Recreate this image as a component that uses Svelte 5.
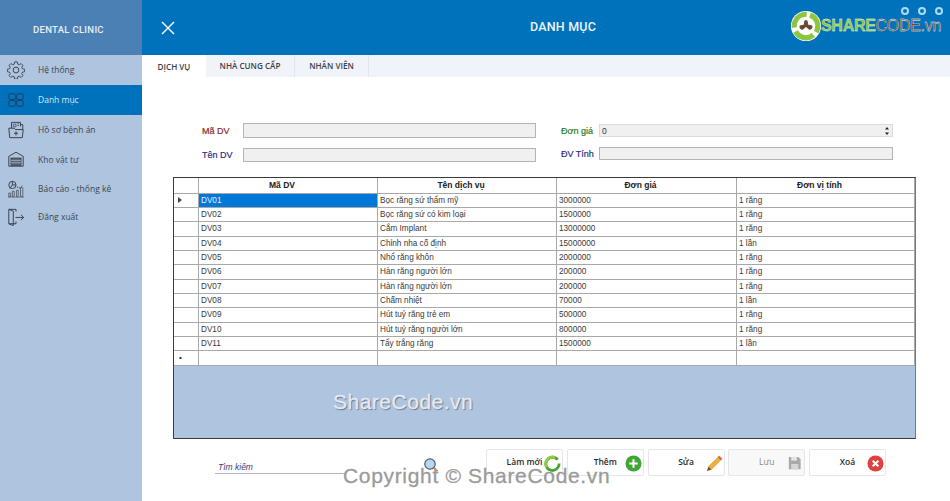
<script>
  const menu = [
    { id: "gear", label: "Hệ thống" },
    { id: "grid", label: "Danh mục", active: true },
    { id: "record", label: "Hồ sơ bệnh án" },
    { id: "store", label: "Kho vật tư" },
    { id: "chart", label: "Báo cáo - thống kê" },
    { id: "exit", label: "Đăng xuất", short: true },
  ];

  const tabs = ["DỊCH VỤ", "NHÀ CUNG CẤP", "NHÂN VIÊN"];

  const rows = [
    ["DV01", "Bọc răng sứ thẩm mỹ", "3000000", "1 răng"],
    ["DV02", "Bọc răng sứ có kim loại", "1500000", "1 răng"],
    ["DV03", "Cắm Implant", "13000000", "1 răng"],
    ["DV04", "Chỉnh nha cố định", "15000000", "1 lần"],
    ["DV05", "Nhổ răng khôn", "2000000", "1 răng"],
    ["DV06", "Hàn răng người lớn", "200000", "1 răng"],
    ["DV07", "Hàn răng người lớn", "200000", "1 răng"],
    ["DV08", "Chấm nhiệt", "70000", "1 lần"],
    ["DV09", "Hút tuỷ răng trẻ em", "500000", "1 răng"],
    ["DV10", "Hút tuỷ răng người lớn", "800000", "1 răng"],
    ["DV11", "Tẩy trắng răng", "1500000", "1 lần"],
  ];
</script>

<div class="app">
  <aside class="sidebar">
    <div class="brand">DENTAL CLINIC</div>
    <nav>
      {#each menu as item}
        <div class="item" class:active={item.active} class:short={item.short}>
          <svg class="micon" viewBox="0 0 20 20" fill="none" stroke="currentColor" stroke-width="1.100">
            {#if item.id === "gear"}
              <circle cx="10" cy="10" r="3.200" />
              <path d="M8.500 1.500h3l.5 2.600 1.800.8 2.200-1.400 2.100 2.100-1.400 2.200.8 1.800 2.600.5v3l-2.600.5-.8 1.800 1.400 2.200-2.100 2.100-2.200-1.400-1.800.8-.5 2.600h-3l-.5-2.600-1.800-.8-2.200 1.400-2.100-2.100 1.400-2.200-.8-1.800-2.600-.5v-3l2.600-.5.8-1.800-1.400-2.200 2.100-2.100 2.200 1.400 1.800-.8z" transform="translate(.5 -.5) scale(.95)" />
            {:else if item.id === "grid"}
              <rect x="2" y="3" width="7.500" height="6.500" rx="1.800" />
              <rect x="10.500" y="3" width="7.500" height="6.500" rx="1.800" />
              <rect x="2" y="10.500" width="7.500" height="6.500" rx="1.800" />
              <rect x="10.500" y="10.500" width="7.500" height="6.500" rx="1.800" />
            {:else if item.id === "record"}
              <path d="M5 8V1.500h10V6" />
              <path d="M7 3.500h3v3H7zM11.500 3h2M11.500 5h2" stroke-width=".8" />
              <path d="M15 4h2.500v5" />
              <path d="M2 8h6l1.200 1.500H18l-1 9H3z" />
              <path d="M10 11.500v4.500M7.800 13.700h4.400" />
            {:else if item.id === "store"}
              <path d="M2 7 10 2.500 18 7v11H2z" />
              <rect x="4.500" y="9" width="11" height="8" fill="#5f6875" stroke="#3a4452" />
              <path d="M4.500 11.600h11M4.500 14.200h11" stroke="#afc4de" stroke-width=".7" />
            {:else if item.id === "chart"}
              <circle cx="6" cy="5.500" r="4" />
              <path d="M6 5.500V1.500h0M6 5.500h4" />
              <path d="M3 9.500 6 5.500" />
              <path d="M11 7.500l2.500 1.500 4-3" stroke-dasharray="1.500 1" />
              <path d="M2 18.500v-4h2v4zM6 18.500v-6h2v6zM10.500 18.500v-7h2v7zM15 18.500V8.500h2.500v10z" stroke-width=".8" />
              <path d="M1 19h18" stroke-width=".6" />
            {:else}
              <path d="M10 4V1.500H2v16h8V15" />
              <path d="M2 1.500l5 2V19.500l-5-2" />
              <path d="M9.500 10.500h9M15.500 7.500l3 3-3 3" />
            {/if}
          </svg>
          <span>{item.label}</span>
        </div>
      {/each}
    </nav>
  </aside>

  <main class="main">
    <header class="topbar">
      <svg class="close" viewBox="0 0 14 14" stroke="#fff" stroke-width="1.400" fill="none">
        <path d="M1 1l12 12M13 1L1 13" />
      </svg>
      <h1>DANH MỤC</h1>
      <div class="logo">
        <svg class="logo-mark" viewBox="0 0 34 34" fill="none">
          <circle cx="17" cy="17" r="16" fill="#fff" />
          <circle cx="17" cy="17" r="12.500" stroke="#8cc63f" stroke-width="5.500" stroke-dasharray="22 4.200" transform="rotate(-70 17 17)" />
          <path d="M17 10.500c2 0 2.500 3 2 5l4.500 1c1.500 2-1 5-3 4.500l-3.500-3-3.500 3c-2 .5-4.500-2.500-3-4.500l4.500-1c-.5-2 0-5 2-5z" fill="#6b4a2f" />
        </svg>
        <div class="logo-text"><b>SHARE</b><span>CODE.vn</span></div>
        <div class="dots"><i></i><i></i><i></i></div>
      </div>
    </header>

    <div class="tabs">
      {#each tabs as tab, i}
        <div class="tab" class:current={i === 0}>{tab}</div>
      {/each}
    </div>

    <section class="form">
      <div class="field left">
        <label class="maroon" for="ma">Mã DV</label>
        <input id="ma" />
        <label class="navy" for="ten">Tên DV</label>
        <input id="ten" />
      </div>
      <div class="field right">
        <label class="green" for="gia">Đơn giá</label>
        <div class="spin" id="gia">
          <span>0</span>
          <svg viewBox="0 0 6 10" width="6" height="10" fill="#222"><path d="M3 1l2 2.500H1zM3 9L1 6.500h4z" /></svg>
        </div>
        <label class="navy" for="dvt">ĐV Tính</label>
        <input id="dvt" />
      </div>
    </section>

    <section class="grid">
      <div class="row head">
        <div class="cell"></div>
        <div class="cell">Mã DV</div>
        <div class="cell">Tên dịch vụ</div>
        <div class="cell">Đơn giá</div>
        <div class="cell">Đơn vị tính</div>
      </div>
      {#each rows as r, i}
        <div class="row">
          <div class="cell mark">
            {#if i === 0}<svg viewBox="0 0 4 6" width="4" height="6" fill="#444"><path d="M0 0l4 3-4 3z" /></svg>{/if}
          </div>
          <div class="cell" class:selected={i === 0}>{r[0]}</div>
          <div class="cell">{r[1]}</div>
          <div class="cell">{r[2]}</div>
          <div class="cell">{r[3]}</div>
        </div>
      {/each}
      <div class="row">
        <div class="cell mark star">•</div>
        <div class="cell"></div>
        <div class="cell"></div>
        <div class="cell"></div>
        <div class="cell"></div>
      </div>
    </section>

    <section class="toolbar">
      <div class="search">
        <span>Tìm kiếm</span>
        <svg class="lens" viewBox="0 0 16 16" fill="none">
          <path d="M10 10l4.500 4.500" stroke="#c58a3c" stroke-width="2" />
          <circle cx="7" cy="7" r="5.200" fill="#bcd6ee" stroke="#3f5f86" stroke-width="1.200" />
        </svg>
      </div>
      <button class="btn">
        <span>Làm mới</span>
        <svg viewBox="0 0 18 18" fill="none">
          <path d="M14.500 5A7 7 0 1 0 16 9" stroke="#4aa52e" stroke-width="3" />
          <path d="M3 13A7 7 0 0 1 12 3" stroke="#8ccb4a" stroke-width="3" />
        </svg>
      </button>
      <button class="btn">
        <span>Thêm</span>
        <svg viewBox="0 0 18 18">
          <circle cx="9" cy="9" r="8.500" fill="#3fa535" />
          <path d="M9 4.500v9M4.500 9h9" stroke="#fff" stroke-width="2.200" />
        </svg>
      </button>
      <button class="btn">
        <span>Sửa</span>
        <svg viewBox="0 0 18 18">
          <path d="M14 1l3 3L5.500 15.500l-3-3z" fill="#f0b23c" stroke="#c98a1e" stroke-width=".6" />
          <path d="M14 1l3 3-1.500 1.500-3-3z" fill="#d9605a" />
          <path d="M2.500 12.500l3 3L1 17z" fill="#6b4a2f" />
        </svg>
      </button>
      <button class="btn off">
        <span>Lưu</span>
        <svg viewBox="0 0 18 18">
          <path d="M3 2h10l2.500 2.500V15H3z" fill="#a9a9a9" />
          <rect x="5.500" y="2" width="6" height="4" fill="#e4e4e4" />
          <rect x="5.500" y="9.500" width="7.500" height="5.500" fill="#d6d6d6" />
        </svg>
      </button>
      <button class="btn">
        <span>Xoá</span>
        <svg viewBox="0 0 18 18">
          <circle cx="9" cy="9" r="8.500" fill="#dd4140" />
          <path d="M6 6l6 6M12 6l-6 6" stroke="#fff" stroke-width="2.200" />
        </svg>
      </button>
    </section>
  </main>

  <div class="wm wm-mid">ShareCode.vn</div>
  <div class="wm wm-bottom">Copyright © ShareCode.vn</div>
</div>

<style>
  :global(body) {
    margin: 0;
    background: #fff;
  }

  .app {
    position: relative;
    display: grid;
    grid-template-columns: 142px 808px;
    width: 950px;
    height: 501px;
    overflow: hidden;
    font-family: "Liberation Sans", Arial, sans-serif;
  }

  .sidebar {
    background: #afc4de;
    color: #3c4654;
  }

  .brand {
    height: 55px;
    line-height: 59px;
    padding-left: 33px;
    background: #4a80b3;
    color: #e8eff7;
    font-family: Roboto, sans-serif;
    font-size: 9.500px;
    font-weight: 500;
    letter-spacing: 0.3px;
  }

  .item {
    display: flex;
    align-items: center;
    gap: 13px;
    height: 29.700px;
    padding-left: 7px;
    font-family: "Open Sans", sans-serif;
    font-size: 8.500px;
  }

  .item.short {
    height: 26px;
  }

  .item.active {
    height: 30px;
    background: #0072bc;
    color: #d5e6f5;
  }

  .micon {
    width: 18px;
    height: 18px;
    flex: none;
    color: #3a4452;
  }

  .active .micon {
    color: #1d3f66;
  }

  .main {
    display: flex;
    flex-direction: column;
  }

  .topbar {
    position: relative;
    display: flex;
    align-items: center;
    justify-content: center;
    flex: none;
    height: 55px;
    background: #0072bc;
  }

  .close {
    position: absolute;
    left: 19px;
    top: 21px;
    width: 14px;
    height: 14px;
  }

  h1 {
    margin: 0 0 2px 34px;
    color: #eef5fb;
    font-family: Roboto, sans-serif;
    font-size: 12.500px;
    font-weight: 500;
    letter-spacing: 0.2px;
  }

  .logo {
    position: absolute;
    left: 648px;
    top: 9px;
    display: flex;
    align-items: center;
    width: 160px;
    height: 34px;
  }

  .logo-mark {
    width: 32px;
    height: 32px;
    flex: none;
  }

  .logo-text {
    margin-left: -1px;
    font-size: 16px;
    letter-spacing: -0.3px;
    white-space: nowrap;
    -webkit-text-stroke: 0.300px #fff;
  }

  .logo-text b {
    color: #8cc63f;
    font-weight: 700;
  }

  .logo-text span {
    color: #6b4a2f;
  }

  .dots {
    position: absolute;
    right: 7px;
    top: -2px;
    display: flex;
    gap: 9px;
  }

  .dots i {
    width: 4px;
    height: 4px;
    border: 2px solid #a9dcf5;
    border-radius: 50%;
  }

  .tabs {
    display: flex;
    flex: none;
    height: 22px;
    background: #f0f4f8;
  }

  .tab {
    display: flex;
    align-items: center;
    justify-content: center;
    width: 73px;
    height: 21px;
    padding-bottom: 1px;
    border-right: 1px solid #e2e6ea;
    color: #3a4048;
    font-family: "Open Sans", sans-serif;
    font-size: 8.100px;
    font-weight: 600;
    white-space: nowrap;
  }

  .tab.current {
    width: 64px;
    height: 22px;
    padding-bottom: 0;
    background: #fff;
    border-right: 0;
  }

  .tab:nth-child(2) {
    width: 88px;
  }

  .form {
    display: grid;
    grid-template-columns: 394px 332px;
    gap: 25px;
    flex: none;
    height: 100px;
    padding: 46px 0 0 60px;
    box-sizing: border-box;
  }

  .field {
    display: grid;
    align-items: center;
    height: 39px;
    font-size: 9px;
  }

  .left {
    grid-template-columns: 41px 293px;
    grid-template-rows: 15px 14px;
    row-gap: 10px;
  }

  .right {
    grid-template-columns: 38px 294px;
    grid-template-rows: 13px 13px;
    row-gap: 10px;
    padding-top: 1px;
    margin-left: -60px;
  }

  label {
    -webkit-text-stroke: 0.2px currentColor;
  }

  .maroon {
    color: #8a2a2a;
  }

  .navy {
    color: #2d2d80;
  }

  .green {
    color: #1f7d2a;
  }

  input,
  .spin {
    width: 100%;
    height: 100%;
    margin: 0;
    padding: 0;
    box-sizing: border-box;
    background: #f0f0f0;
    border: 1px solid #b4b4b4;
    border-radius: 0;
    outline: none;
  }

  .spin {
    display: flex;
    align-items: center;
    justify-content: space-between;
    padding: 0 2px;
    border-color: #dcdcdc;
    color: #333;
    font-size: 8.500px;
  }

  .grid {
    display: flex;
    flex-direction: column;
    flex: none;
    width: 743px;
    height: 262px;
    margin-left: 31px;
    box-sizing: border-box;
    background: #afc4de;
    border: 1px solid #3a3a3a;
    border-right-color: #777;
    color: #3a3a3a;
    font-size: 8.200px;
  }

  .row {
    display: grid;
    grid-template-columns: 25px 179px 179px 180px 178px;
    flex: none;
    height: 14.360px;
    background: #fff;
  }

  .row.head {
    height: 15.500px;
    color: #222;
    font-size: 8.500px;
    font-weight: 700;
    text-align: center;
  }

  .cell {
    box-sizing: border-box;
    height: 100%;
    padding-left: 2px;
    border-right: 1px solid #a8a8a8;
    border-bottom: 1px solid #a8a8a8;
    line-height: 13.500px;
    white-space: nowrap;
    overflow: hidden;
  }

  .head .cell {
    padding: 0 12px 0 0;
    line-height: 14.500px;
  }

  .mark {
    display: flex;
    align-items: center;
    padding-left: 4px;
  }

  .star {
    padding-left: 5px;
    font-size: 8px;
    color: #222;
  }

  .selected {
    background: #0078d7;
    color: #e6f1fb;
  }

  .toolbar {
    display: flex;
    flex: none;
    gap: 3.750px;
    margin: 10px 0 0 344px;
    position: relative;
    height: 28px;
  }

  .search {
    position: absolute;
    left: -271px;
    top: 0;
    width: 225px;
    height: 25px;
    box-sizing: border-box;
    padding: 13px 0 0 3px;
    color: #3b3b7c;
    font-size: 8.500px;
    font-style: italic;
    border-bottom: 1px solid;
    border-image: linear-gradient(to right, #b5b5d0 130px, transparent 130px) 1;
  }

  .lens {
    position: absolute;
    left: 208px;
    top: 8px;
    width: 16px;
    height: 16px;
  }

  .btn {
    position: relative;
    display: flex;
    align-items: center;
    justify-content: center;
    width: 77px;
    height: 27px;
    padding: 0 0 2px;
    box-sizing: border-box;
    background: #fff;
    border: 1px solid #e6e6e6;
    border-radius: 2px;
    color: #2a2a2a;
    font-family: "Open Sans", sans-serif;
    font-size: 8.500px;
    font-weight: 600;
  }

  .btn svg {
    position: absolute;
    right: 1px;
    top: 5px;
    width: 17px;
    height: 17px;
  }

  .btn.off {
    background: #f8f8f8;
    color: #8a8a8a;
    font-weight: 400;
  }

  .wm {
    position: absolute;
    color: #9a9a9a;
    font-size: 21px;
    white-space: nowrap;
    letter-spacing: 0.5px;
    -webkit-text-stroke: 0.3px currentColor;
    text-shadow: 1px 1px 1px rgba(255, 255, 255, 0.7);
  }

  .wm-mid {
    left: 333px;
    top: 390px;
    color: #e4eaf2;
    text-shadow: 1px 1px 1px rgba(80, 90, 110, 0.8);
  }

  .wm-bottom {
    left: 343px;
    top: 464px;
    letter-spacing: 0.67px;
  }
</style>
